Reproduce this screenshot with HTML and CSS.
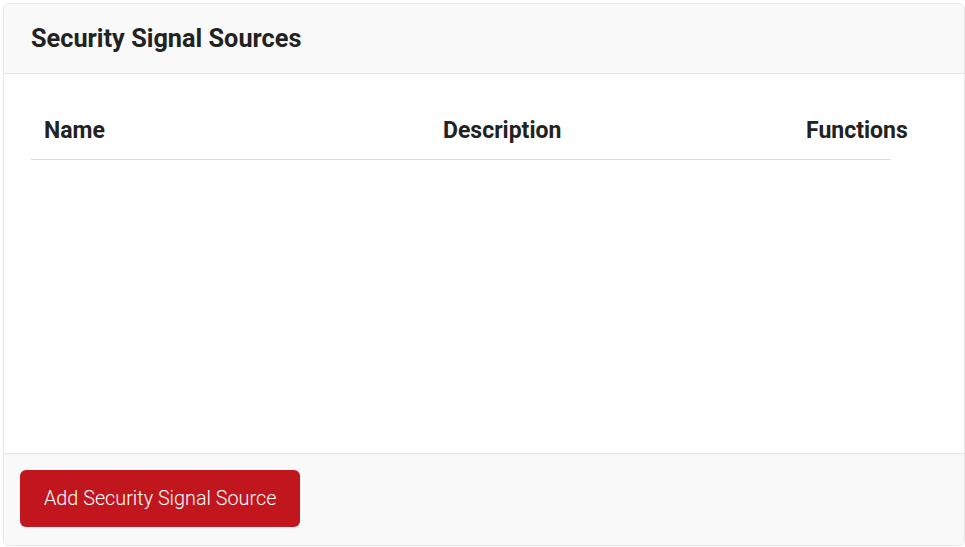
FILE: index.html
```html
<!DOCTYPE html>
<html lang="en">
<head>
    <meta charset="UTF-8">
    <meta name="viewport" content="width=device-width, initial-scale=1.0">
    <title>Security Signal Sources</title>
    <link rel="stylesheet" href="styles.css">
</head>
<body>

    <div class="card">
        <div class="card-header">
            <h2>Security Signal Sources</h2>
        </div>

        <div class="card-body">
            <table class="sources">
                <colgroup>
                    <col class="col-name">
                    <col class="col-desc">
                    <col class="col-func">
                </colgroup>
                <thead>
                    <tr>
                        <th>Name</th>
                        <th>Description</th>
                        <th>Functions</th>
                    </tr>
                </thead>
                <tbody></tbody>
            </table>
        </div>

        <div class="card-footer">
            <button class="btn-add">Add Security Signal Source</button>
        </div>
    </div>

</body>
</html>
```

FILE: styles.css
```css
/* Base */
:root {
    --border: #e6e6e6;
    --panel: #f9f9f9;
    --text: #222222;
    --red: #c1161e;
}

body {
    margin: 0;
    padding: 3px 0 0 3px;
    font-family: 'Roboto', 'Liberation Sans', sans-serif;
    color: var(--text);
    background: #ffffff;
}

/* Card */
.card {
    width: 962px;
    height: 543px;
    box-sizing: border-box;
    border: 1px solid var(--border);
    border-radius: 6px;
    display: flex;
    flex-direction: column;
    overflow: hidden;
}

.card-header {
    height: 69px;
    background: var(--panel);
    border-bottom: 1px solid var(--border);
    padding: 0 27px;
    display: flex;
    align-items: center;
}

.card-header h2 {
    margin: 0;
    font-size: 25.3px;
    font-weight: 700;
}

.card-body {
    flex: 1;
    padding: 27px 27px 0;
}

/* Table */
.sources {
    table-layout: fixed;
    width: 860px;
    border-collapse: collapse;
}

.col-name { width: 399px; }
.col-desc { width: 363px; }
.col-func { width: 98px; }

.sources th {
    text-align: left;
    font-size: 23px;
    font-weight: 700;
    padding: 16px 13px 15px;
    border-bottom: 1px solid #dcdcdc;
    white-space: nowrap;
    overflow: visible;
}

/* Footer */
.card-footer {
    height: 92px;
    box-sizing: border-box;
    background: var(--panel);
    border-top: 1px solid var(--border);
    padding: 16px 16px;
}

.btn-add {
    height: 57px;
    padding: 0 24px;
    border: none;
    border-radius: 6px;
    background: var(--red);
    color: #ffffff;
    font-family: inherit;
    font-size: 19.8px;
    font-weight: 300;
    cursor: pointer;
}
```
